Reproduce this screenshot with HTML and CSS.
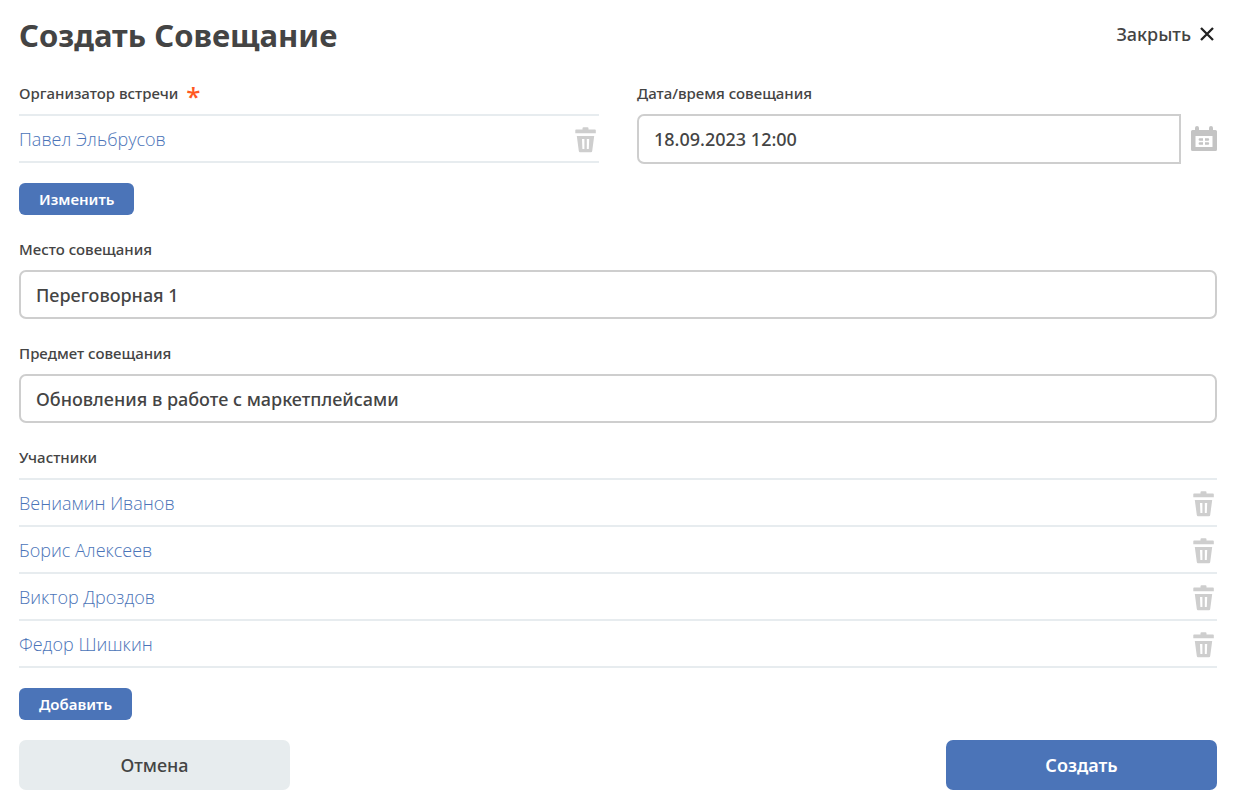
FILE: index.html
```html
<!DOCTYPE html>
<html lang="ru">
<head>
<meta charset="utf-8">
<meta name="viewport" content="width=device-width, initial-scale=1">
<title>Создать Совещание</title>
<link rel="stylesheet" href="styles.css">
</head>
<body>
<svg class="sprite" aria-hidden="true">
  <symbol id="trash" viewBox="0 0 22 26">
    <path d="M1 2.5H7.5V1.2Q7.5 .3 8.5 .3H12.5Q13.5 .3 13.5 1.2V2.5H20Q20.8 2.5 20.8 3.3V6.2H.3V3.3Q.3 2.5 1 2.5Z"/>
    <path fill-rule="evenodd" d="M1.8 9H19.2L17.2 24Q17 25.2 16 25.2H5Q4 25.2 3.8 24ZM7 12L7.4 22H9.4V12ZM11.8 12V22H13.8L14.2 12Z"/>
  </symbol>
</svg>
<main class="dialog">
  <header class="header">
    <h1 class="title">Создать Совещание</h1>
    <button class="close" type="button">Закрыть
      <svg class="close-icon" viewBox="0 0 14 14" aria-hidden="true"><path d="M1 1L13 13M13 1L1 13"/></svg>
    </button>
  </header>
  <form class="form">
    <div class="columns">
      <section class="field" aria-labelledby="organizer">
        <h2 class="label" id="organizer">Организатор встречи <span class="required">*</span></h2>
        <ul class="people">
          <li class="person"><a class="person-link" href="#">Павел Эльбрусов</a><button class="remove" type="button" aria-label="Удалить"><svg class="trash-icon"><use href="#trash"/></svg></button></li>
        </ul>
        <button class="small-button" type="button">Изменить</button>
      </section>
      <div class="field">
        <label class="label" for="date">Дата/время совещания</label>
        <div class="date-row">
          <input class="input date-input" id="date" type="text" value="18.09.2023 12:00">
          <button class="calendar" type="button" aria-label="Выбрать дату">
            <svg class="calendar-icon" viewBox="0 0 26 26" aria-hidden="true"><path fill-rule="evenodd" d="M1.5 4H4V2Q4 0 6 0T8 2V4H18V2Q18 0 20 0T22 2V4H24.5Q26 4 26 5.5V23.5Q26 25 24.5 25H1.5Q0 25 0 23.5V5.5Q0 4 1.5 4ZM4.5 10V21H21.5V10Z"/><path d="M8.8 12.3H12V14.7H8.8Q7.6 14.7 7.6 13.5T8.8 12.3ZM14 12.3H17Q18.2 12.3 18.2 13.5T17 14.7H14ZM8.8 16.3H12V18.7H8.8Q7.6 18.7 7.6 17.5T8.8 16.3ZM14 16.3H17Q18.2 16.3 18.2 17.5T17 18.7H14Z"/></svg>
          </button>
        </div>
      </div>
    </div>
    <div class="field">
      <label class="label" for="place">Место совещания</label>
      <input class="input" id="place" type="text" value="Переговорная 1">
    </div>
    <div class="field">
      <label class="label" for="subject">Предмет совещания</label>
      <input class="input" id="subject" type="text" value="Обновления в работе с маркетплейсами">
    </div>
    <section class="field" aria-labelledby="members">
      <h2 class="label" id="members">Участники</h2>
      <ul class="people">
        <li class="person"><a class="person-link" href="#">Вениамин Иванов</a><button class="remove" type="button" aria-label="Удалить"><svg class="trash-icon"><use href="#trash"/></svg></button></li>
        <li class="person"><a class="person-link" href="#">Борис Алексеев</a><button class="remove" type="button" aria-label="Удалить"><svg class="trash-icon"><use href="#trash"/></svg></button></li>
        <li class="person"><a class="person-link" href="#">Виктор Дроздов</a><button class="remove" type="button" aria-label="Удалить"><svg class="trash-icon"><use href="#trash"/></svg></button></li>
        <li class="person"><a class="person-link" href="#">Федор Шишкин</a><button class="remove" type="button" aria-label="Удалить"><svg class="trash-icon"><use href="#trash"/></svg></button></li>
      </ul>
      <button class="small-button" type="button">Добавить</button>
    </section>
    <footer class="actions">
      <button class="action cancel" type="button">Отмена</button>
      <button class="action create" type="submit">Создать</button>
    </footer>
  </form>
</main>
</body>
</html>
```
FILE: styles.css
```css
* { box-sizing: border-box; }
body {
  margin: 0;
  background: #fff;
  color: #444;
  font-family: "Noto Sans", "Open Sans", sans-serif;
}
button { padding: 0; border: 0; background: none; color: inherit; font: inherit; cursor: pointer; }
.sprite { display: none; }
.dialog { padding: 15px 22px 20px 19px; }
.header { display: flex; align-items: center; justify-content: space-between; height: 40px; }
.title { margin: 0; font-size: 31px; line-height: 40px; font-weight: 700; }
.close { display: flex; align-items: center; gap: 9px; padding: 0 3px 2px 0; font-size: 18px; line-height: 24px; font-weight: 500; }
.close-icon { width: 14px; height: 14px; fill: none; stroke: #222; stroke-width: 2.3; }
.form { display: flex; flex-direction: column; gap: 24px; margin-top: 28px; }
.columns { display: grid; grid-template-columns: 1fr 1fr; gap: 38px; }
.field { display: flex; flex-direction: column; align-items: stretch; }
.label { margin: 0 0 11px; font-size: 15px; line-height: 20px; height: 20px; font-weight: 500; }
.required { margin-left: 4px; color: #ff5722; font-size: 26px; line-height: 20px; font-weight: 500; vertical-align: -7px; }
.people { margin: 0; padding: 0; list-style: none; border-top: 2px solid #e7ecef; }
.person { display: flex; align-items: center; justify-content: space-between; height: 47px; padding-right: 2px; border-bottom: 2px solid #e7ecef; }
.person-link { color: #4b74b8; font-family: "Open Sans", "Noto Sans", sans-serif; font-size: 18px; line-height: 24px; font-weight: 350; text-decoration: none; }
.remove { display: flex; padding-top: 2px; }
.trash-icon { width: 22px; height: 26px; fill: #cecece; }
.small-button { align-self: flex-start; margin-top: 20px; padding: 0 20px; height: 32px; border-radius: 6px; background: #4b74b8; color: #fff; font-size: 15px; line-height: 30px; font-weight: 600; }
.input { width: 100%; height: 49px; padding: 0 15px; border: 2px solid #cecece; border-radius: 7px; background: #fff; color: #444; font-family: inherit; font-size: 18px; font-weight: 500; }
.date-row { display: flex; align-items: center; gap: 10px; }
.date-input { flex: 1; min-width: 0; height: 50px; border-radius: 7px 0 0 7px; }
.calendar { display: flex; }
.calendar-icon { width: 26px; height: 26px; fill: #c4c4c4; }
.actions { display: flex; justify-content: space-between; margin-top: -4px; }
.action { width: 271px; height: 50px; border-radius: 7px; font-size: 18px; line-height: 24px; }
.cancel { background: #e7ecee; font-weight: 500; }
.create { background: #4b74b8; color: #fff; font-weight: 600; }
```
